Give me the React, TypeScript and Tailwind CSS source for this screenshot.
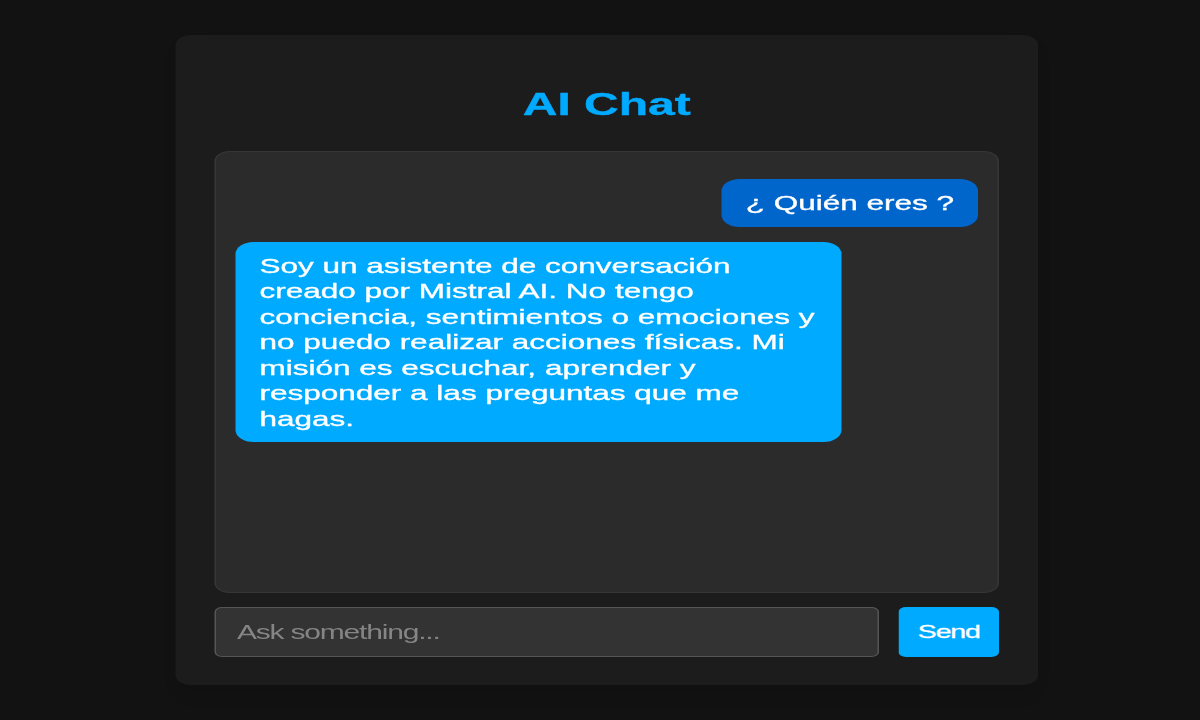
export default function App() {
  return (
    <div className="min-h-screen w-full overflow-hidden bg-[#121212] font-['Liberation_Sans',Arial,sans-serif]">
      <div className="w-[800px] origin-top-left scale-x-150 pt-[35px] pl-[9px]">
        <div className="mx-auto w-[575px] rounded-[10px] bg-[#1c1c1c] px-[26px] pt-[27px] pb-[28px] shadow-lg">
          <h1 className="mt-[24px] mb-[29px] text-center text-[32px] leading-[36px] font-bold text-[#00aaff] [-webkit-text-stroke:0.4px_#00aaff]">
            AI Chat
          </h1>

          <div className="flex h-[442px] flex-col gap-[15px] rounded-[10px] border border-[#363636] bg-[#2b2b2b] px-[13px] pt-[27px]">
            <div className="self-end rounded-xl bg-[#0066cc] px-[16px] py-[11px] text-[21px] leading-[25.5px] text-white [-webkit-text-stroke:0.35px_white]">
              ¿ Quién eres ?
            </div>
            <div className="max-w-[404px] self-start rounded-xl bg-[#00aaff] px-[16px] py-[11px] text-[21px] leading-[25.5px] text-white [-webkit-text-stroke:0.35px_white]">
              Soy un asistente de conversación creado por Mistral AI. No tengo conciencia, sentimientos o emociones y
              no puedo realizar acciones físicas. Mi misión es escuchar, aprender y responder a las preguntas que me
              hagas.
            </div>
          </div>

          <div className="mt-[14px] flex h-[50px] gap-[13px]">
            <input
              type="text"
              placeholder="Ask something..."
              className="min-w-0 flex-1 rounded-[5px] border border-[#555] bg-[#333] px-[14px] text-[20px] tracking-[-0.8px] text-white outline-none placeholder:text-[#858585]"
            />
            <button className="w-[67px] rounded-[5px] bg-[#00aaff] text-[19px] tracking-[-0.8px] text-white [-webkit-text-stroke:0.3px_white]">
              Send
            </button>
          </div>
        </div>
      </div>
    </div>
  );
}
